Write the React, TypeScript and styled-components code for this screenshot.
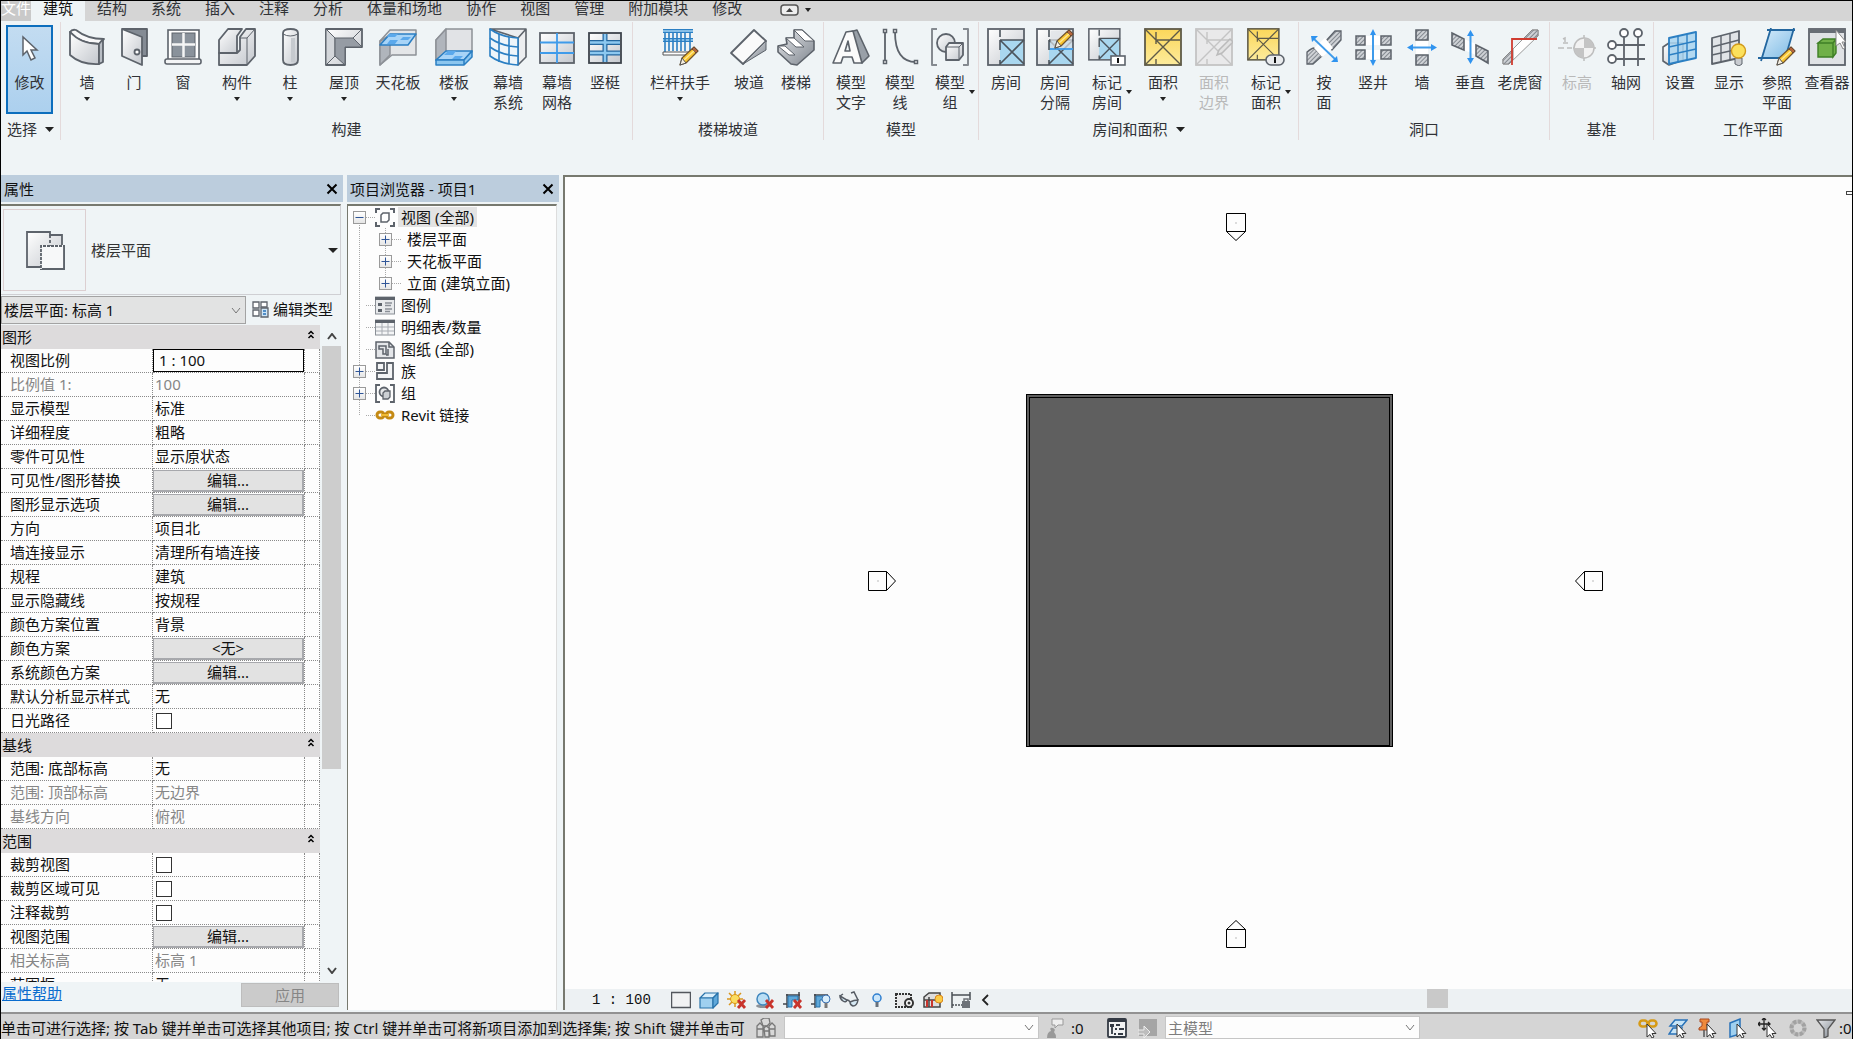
import React from 'react';
import styled, { createGlobalStyle, css } from 'styled-components';

const uiFont = `"Noto Sans", "Noto Sans CJK SC", sans-serif`;
const c = {
  ink: '#303236',
  ribbon: '#eff4f6',
  chrome: '#d5d5d5',
  header: '#bccddd',
  edge: '#77796f',
  steel: '#5d636b',
  blue: '#2b7fc3',
  paper: '#fdfdfd',
};

const GlobalStyle = createGlobalStyle`
  * { box-sizing: border-box; }
  body { margin: 0; background: ${c.ribbon}; overflow: hidden; }
  button, input, select { font: inherit; color: inherit; margin: 0; padding: 0; border: 0; background: none; border-radius: 0; }
  svg { display: block; flex: none; }
`;

const Shell = styled.div`
  height: 100vh;
  display: flex;
  flex-direction: column;
  border: solid #000;
  border-width: 1px 1px 0 1px;
  font: 15px/20px ${uiFont};
  color: ${c.ink};
  background: ${c.ribbon};
  overflow: hidden;
`;

/* ---------- tabs ---------- */
const TabBar = styled.nav`
  display: flex;
  flex: none;
  height: 20px;
  background: ${c.chrome};
`;
const Tab = styled.button<{ $active?: boolean; $file?: boolean }>`
  height: 20px;
  padding: 0 12px;
  line-height: 14px;
  padding-bottom: 6px;
  white-space: nowrap;
  ${(p) => p.$active && css`background: ${c.ribbon}; color: #111;`}
  ${(p) => p.$file && css`background: #c9c9c9; color: #fff; padding-left: 0; padding-right: 0;`}
`;
const CollapseButton = styled.button`
  display: flex;
  align-items: center;
  gap: 6px;
  height: 17px;
  margin-left: 26px;
`;

/* ---------- ribbon ---------- */
const Ribbon = styled.div`
  display: flex;
  flex: none;
  height: 154px;
  padding-top: 1px;
`;
const RibbonPanel = styled.section`
  display: flex;
  flex-direction: column;
  flex: none;
  height: 118px;
  border-right: 1px solid #e4dadb;
  &:last-child { border-right: 0; }
`;
const Tools = styled.div<{ $pad: number }>`
  display: flex;
  height: 98px;
  padding-right: ${(p) => p.$pad}px;
`;
const PanelTitle = styled.div`
  display: flex;
  align-items: center;
  justify-content: center;
  gap: 8px;
  line-height: 18px;
`;
const ToolButton = styled.button<{ $w: number }>`
  width: ${(p) => p.$w}px;
  padding-top: 6px;
  display: flex;
  flex-direction: column;
  align-items: center;
  &:disabled { color: #b9b9b9; }
`;
const ToolLabel = styled.span<{ $side?: boolean }>`
  margin-top: 6px;
  text-align: center;
  white-space: pre;
  ${(p) => p.$side && css`
    display: grid;
    grid-template-columns: 6px auto 6px;
    align-items: center;
    column-gap: 4px;
    &::before { content: ''; }
  `}
`;
const BelowArrow = styled.span`
  margin-top: 5px;
`;
const ModifyButton = styled.button`
  width: 47px;
  height: 89px;
  margin: 3px 6px 0 5px;
  padding-top: 9px;
  display: flex;
  flex-direction: column;
  align-items: center;
  gap: 3px;
  border: 1px solid #0c6ebd;
  outline: 1px solid #0c6ebd;
  outline-offset: -2px;
  background: linear-gradient(#c3dcf1, #acd0ee);
`;

/* ---------- docked panels ---------- */
const Workspace = styled.main`
  display: flex;
  flex: 1;
  min-height: 0;
  font-size: 15px;
  color: #111;
`;
const Dock = styled.section<{ $w: number }>`
  display: flex;
  flex-direction: column;
  flex: none;
  width: ${(p) => p.$w}px;
  margin-right: 4px;
`;
const DockHeader = styled.header`
  display: flex;
  align-items: center;
  justify-content: space-between;
  height: 27px;
  margin-bottom: 2px;
  padding: 0 5px 0 3px;
  background: ${c.header};
`;
const CloseButton = styled.button`
  padding: 0;
`;
const TypeSelector = styled.button`
  display: flex;
  align-items: center;
  height: 91px;
  width: 340px;
  padding: 0 2px;
  border: solid #cfcfd3;
  border-width: 2px 1px 1px 0;
  border-top-color: ${c.edge};
  color: #333;
`;
const Preview = styled.span`
  display: flex;
  align-items: center;
  justify-content: center;
  width: 83px;
  height: 82px;
  border: 1px solid #dccfd1;
`;
const PreviewName = styled.span`
  flex: 1;
  padding-left: 5px;
  text-align: left;
`;
const InstanceRow = styled.div`
  display: flex;
  align-items: center;
  height: 30px;
`;
const Combo = styled.label<{ $w: number; $bg: string; $line: string; $h: number }>`
  display: grid;
  align-items: center;
  width: ${(p) => p.$w}px;
  height: ${(p) => p.$h}px;
  background: ${(p) => p.$bg};
  border: 1px solid ${(p) => p.$line};
  & > * { grid-area: 1 / 1; }
  & > svg { justify-self: end; margin-right: 4px; pointer-events: none; }
`;
const ComboSelect = styled.select<{ $muted?: boolean }>`
  appearance: none;
  width: 100%;
  height: 100%;
  padding: 0 24px 0 2px;
  opacity: 1;
  color: ${(p) => (p.$muted ? '#7d7d7d' : '#111')};
`;
const EditType = styled.button`
  display: flex;
  align-items: center;
  gap: 4px;
  margin-left: 6px;
  padding-bottom: 2px;
`;
const PropertyArea = styled.div`
  display: flex;
  flex: 1;
  min-height: 0;
  width: 340px;
  overflow: hidden;
`;
const PropertyTable = styled.table`
  width: 319px;
  table-layout: fixed;
  border-spacing: 0;
  align-self: flex-start;
  background: ${c.paper};
`;
const GroupHead = styled.th`
  height: 24px;
  padding: 0;
  background: #dddbdc;
  font-weight: 400;
`;
const GroupToggle = styled.button`
  display: flex;
  align-items: center;
  justify-content: space-between;
  width: 100%;
  padding: 0 5px 0 1px;
`;
const Cell = styled.td<{ $muted?: boolean; $label?: boolean; $control?: boolean }>`
  height: 24px;
  padding: ${(p) => (p.$control ? '0' : p.$label ? '0 0 2px 9px' : '0 0 2px 2px')};
  border: dotted #8a8a8a;
  border-width: 0 1px 1px 0;
  line-height: 20px;
  white-space: nowrap;
  color: ${(p) => (p.$muted ? '#868686' : '#111')};
`;
const ValueInput = styled.input`
  display: block;
  width: 100%;
  height: 23px;
  padding: 0 0 2px 5px;
  border: 1px solid #000;
`;
const ValueButton = styled.button`
  display: block;
  width: 100%;
  height: 22px;
  line-height: 18px;
  background: #e2e2e2;
  border: solid #a7a8ac;
  border-width: 1px 2px 2px 1px;
`;
const Tick = styled.input`
  appearance: none;
  display: block;
  width: 16px;
  height: 16px;
  margin-left: 3px;
  border: 1px solid #333;
  background: #fff;
`;
const ScrollTrack = styled.div`
  display: flex;
  flex-direction: column;
  align-items: center;
  width: 21px;
  padding: 8px 0 8px 2px;
`;
const ScrollThumb = styled.div`
  width: 19px;
  height: 423px;
  margin: 6px 0 auto;
  background: #cdcdcd;
`;
const DockFooter = styled.footer`
  display: flex;
  justify-content: space-between;
  align-items: center;
  height: 30px;
  padding: 0 4px 4px 1px;
`;
const HelpLink = styled.a`
  color: #0a6cce;
  text-decoration: underline;
  line-height: 18px;
  padding-bottom: 4px;
`;
const ApplyButton = styled.button`
  width: 98px;
  height: 24px;
  background: #cbcbcb;
  border: 1px solid #bdbdbd;
  color: #868686;
`;

/* ---------- project browser ---------- */
const Tree = styled.ul`
  flex: 1;
  margin: 0 2px 2px 0;
  padding: 0 0 0 5px;
  list-style: none;
  background: ${c.paper};
  border: solid ${c.edge};
  border-width: 2px 1px 0 1px;
  border-right-color: #ddd;
`;
const TreeRow = styled.li`
  display: flex;
  align-items: center;
  height: 22px;
`;
const Slot = styled.span<{ $line: 'full' | 'top' | 'bottom' }>`
  display: flex;
  align-items: center;
  width: 13px;
  height: 22px;
  background: repeating-linear-gradient(#aaa 0 1px, transparent 1px 2px) no-repeat;
  background-size: 1px ${(p) => (p.$line === 'full' ? '100%' : '50%')};
  background-position: 6px ${(p) => (p.$line === 'bottom' ? '100%' : '0')};
`;
const Expander = styled.button`
  width: 13px;
  height: 13px;
  border: 1px solid #9a9a9a;
  background: linear-gradient(#fff, #e6e6e6);
`;
const Link = styled.span`
  width: 9px;
  height: 1px;
  background: repeating-linear-gradient(90deg, #aaa 0 1px, transparent 1px 2px);
`;
const Indent = styled.span`
  width: 13px;
`;
const NodeName = styled.span<{ $selected?: boolean }>`
  margin-left: 3px;
  padding: 0 3px;
  line-height: 20px;
  white-space: nowrap;
  background: ${(p) => (p.$selected ? '#e3e3e3' : 'transparent')};
`;

/* ---------- canvas ---------- */
const ViewArea = styled.section`
  display: flex;
  flex-direction: column;
  flex: 1;
  min-width: 0;
  margin: 0 0 2px;
  border: solid ${c.edge};
  border-width: 2px 0 0 2px;
`;
const Canvas = styled.div`
  position: relative;
  flex: 1;
  background: ${c.paper};
  overflow: hidden;
`;
const Placed = styled.div<{ $x: number; $y: number }>`
  position: absolute;
  left: ${(p) => p.$x}px;
  top: ${(p) => p.$y}px;
`;
const FloorSlab = styled(Placed)`
  width: 367px;
  height: 353px;
  border: 1px solid #000;
  background: #5f5f5f;
  padding: 2px;
  &::before {
    content: '';
    display: block;
    height: 100%;
    border: 1px solid #000;
  }
`;
const CornerHandle = styled(Placed)`
  width: 8px;
  height: 4px;
  border: 1px solid #444;
`;
const ViewBar = styled.div`
  display: flex;
  align-items: center;
  height: 21px;
  background: #edf1f3;
`;
const ScaleButton = styled.button`
  width: 102px;
  padding-left: 27px;
  text-align: left;
  font: 14px/18px "Liberation Mono", monospace;
  color: #111;
  white-space: pre;
`;
const IconButton = styled.button<{ $w: number }>`
  display: flex;
  justify-content: center;
  align-items: center;
  width: ${(p) => p.$w}px;
  flex: none;
`;
const HScroll = styled.div`
  flex: 1;
  display: flex;
  height: 21px;
  padding-left: 432px;
`;
const HThumb = styled.div`
  width: 21px;
  height: 19px;
  background: #c9c9c9;
`;

/* ---------- status bar ---------- */
const StatusBar = styled.footer`
  display: flex;
  align-items: center;
  flex: none;
  height: 27px;
  padding-top: 2px;
  border-top: 2px solid #929292;
  background: ${c.chrome};
  color: #111;
`;
const Hint = styled.span`
  flex: 0 0 747px;
  overflow: hidden;
  white-space: nowrap;
  line-height: 22px;
`;
const Count = styled.span<{ $w: number }>`
  width: ${(p) => p.$w}px;
  white-space: nowrap;
`;
const Push = styled.span`
  flex: 1;
`;

/* ---------- small glyphs ---------- */
const Caret = ({ w = 6, h = 4 }: { w?: number; h?: number }) => (
  <svg width={w} height={h} viewBox="0 0 6 4" preserveAspectRatio="none"><path d="M0 0H6L3 4Z" fill="#222" /></svg>
);
const Chevron = ({ up, dark }: { up?: boolean; dark?: boolean }) => (
  <svg width="10" height="7" viewBox="0 0 10 7">
    <path d={up ? 'M1 6L5 1L9 6' : 'M1 1L5 6L9 1'} fill="none" stroke={dark ? '#444' : '#777'} strokeWidth={dark ? 2 : 1} />
  </svg>
);
const DoubleUp = () => (
  <svg width="8" height="14" viewBox="0 0 8 14"><path d="M1.500 4L4 1.500L6.500 4M1.500 8L4 5.500L6.500 8" fill="none" stroke="#000" strokeWidth="1.500" /></svg>
);
const Cross = () => (
  <svg width="12" height="12" viewBox="0 0 12 12"><path d="M1.500 1.500L10.500 10.500M10.500 1.500L1.500 10.500" stroke="#000" strokeWidth="2" /></svg>
);

const HiddenDefs = styled.svg`
  position: absolute;
`;
const Defs = () => (
  <HiddenDefs width="0" height="0" aria-hidden>
    <defs>
      <linearGradient id="m" x1="0" y1="0" x2="1" y2="1"><stop offset="0" stopColor="#fff" /><stop offset="1" stopColor="#c3c7cd" /></linearGradient>
      <linearGradient id="d" x1="0" y1="0" x2="1" y2="1"><stop offset="0" stopColor="#e6e8eb" /><stop offset="1" stopColor="#7e858e" /></linearGradient>
      <linearGradient id="b" x1="0" y1="0" x2="1" y2="1"><stop offset="0" stopColor="#d8ecfa" /><stop offset="1" stopColor="#7fbce6" /></linearGradient>
      <linearGradient id="y" x1="0" y1="0" x2="0" y2="1"><stop offset="0" stopColor="#fbd75a" /><stop offset="1" stopColor="#fdeb9c" /></linearGradient>
      <pattern id="h" width="3" height="3" patternUnits="userSpaceOnUse" patternTransform="rotate(45)"><rect width="3" height="3" fill="#cfd2d6" /><path d="M0 0V3" stroke="#70767e" strokeWidth="1.600" /></pattern>
    </defs>
  </HiddenDefs>
);

const S = c.steel;
const Pencil = ({ x, y }: { x: number; y: number }) => (
  <g transform={`translate(${x} ${y})`} strokeLinejoin="round">
    <path d="M1 19L3 12L15 1L19 5L7 17Z" fill="#f8c531" stroke="#72542c" strokeWidth="1.200" />
    <path d="M13 3L15 1L19 5L17 7Z" fill="#b5653a" stroke="#6b4a35" />
    <path d="M5 14L15 5" stroke="#ffe78e" strokeWidth="1.500" />
    <path d="M1 19L3 12L7 17Z" fill="#f7efe0" stroke="#555" />
  </g>
);
const RoomPlan = ({ s = 36 }: { s?: number }) => (
  <g transform={`scale(${s / 36})`}>
    <rect x="1" y="1" width="36" height="36" fill="url(#m)" stroke={S} strokeWidth="1.800" />
    <path d="M13 12H36V36H13Z" fill="#a9d7ef" />
    <path d="M13 2V9M13 12H37M13 12V22M13 32V37M37 12L13 36M13 12L37 36" stroke="#4c545c" strokeWidth="1.600" fill="none" />
  </g>
);
const AreaPlan = ({ s = 36, off }: { s?: number; off?: boolean }) => (
  <g transform={`scale(${s / 36})`}>
    <rect x="1" y="1" width="36" height="36" fill={off ? '#e9e9ea' : 'url(#y)'} stroke={off ? '#c4c4c4' : '#5e5a48'} strokeWidth="1.800" />
    <path d="M1 1L37 37M37 1L1 37M12 4V16M12 12H36M12 31V36" stroke={off ? '#c4c4c4' : '#5e5a48'} strokeWidth="1.400" fill="none" />
  </g>
);

const icons: Record<string, React.ReactNode> = {
  wall: <g stroke={S} strokeWidth="1.800" strokeLinejoin="round"><path d="M2 4Q4 1 8 2Q19 11 36 11L31 16Q13 16 2 4Z" fill="#f8f8f9" /><path d="M2 4Q13 16 31 16V36Q13 37 2 27Z" fill="url(#m)" /><path d="M31 16L35 11V34L31 36Z" fill="#b8bdc4" /></g>,
  door: <g stroke={S} strokeWidth="1.800" strokeLinejoin="round"><path d="M7 1H32V28H27" fill="#848b94" /><path d="M7 1L27 9V37L7 28Z" fill="url(#m)" /><circle cx="22" cy="24" r="2.500" fill="#fff" /></g>,
  window: <g stroke={S} strokeWidth="1.600"><rect x="4" y="2" width="31" height="30" fill="#fff" /><rect x="8" y="5" width="23" height="24" fill="#8a929b" strokeWidth="1" /><path d="M19.500 5V29M8 16.500H31" stroke="#f5f5f5" strokeWidth="2.500" /><rect x="1" y="31" width="36" height="5" rx="2" fill="#f4f5f6" /></g>,
  component: <g stroke={S} strokeWidth="1.800" strokeLinejoin="round"><path d="M1 12L10 1H24L19 8V25H1Z" fill="url(#m)" /><path d="M1 25H19L22 22V9L28 1H37V28L29 37H1Z" fill="url(#m)" /><path d="M22 10H29L37 1M29 10V37" fill="none" strokeWidth="1" /></g>,
  column: <g stroke={S} strokeWidth="1.800"><path d="M12 5Q12 1 19.500 1T27 5V32Q27 37 19.500 37T12 32Z" fill="url(#m)" /><path d="M12 6Q19 10 27 6" fill="none" strokeWidth="1" /><path d="M22 10V34" stroke="#c6cacf" strokeWidth="4" /></g>,
  roof: <g stroke={S} strokeWidth="1.800" strokeLinejoin="round"><path d="M1 1H37V19H20V37H1Z" fill="url(#m)" /><path d="M1 1L10 10V28L1 37Z" fill="#d3d6da" strokeWidth="1" /><path d="M10 10H28L37 19H20V37L10 28Z" fill="#969ca4" strokeWidth="1" /><path d="M28 10L37 1" strokeWidth="1" /></g>,
  ceiling: <g strokeWidth="1.500" strokeLinejoin="round"><path d="M1 13L11 2H37V27H13L1 37Z" fill="#e4e6e8" stroke="#8d9197" /><path d="M1 13L11 7V27L1 37Z" fill="#b0b5bc" stroke="#8d9197" /><path d="M11 6H37L29 17H1Z" fill="#a8d4f7" stroke={c.blue} /><path d="M10 6H19L16 9H8ZM24 9H32L29 12H21ZM11 12H19L16 16H8Z" fill="#5ba9ec" /></g>,
  floor: <g strokeWidth="1.500" strokeLinejoin="round"><path d="M1 12L11 1H37V24H11L1 32Z" fill="#e1e3e6" stroke="#8d9197" /><path d="M1 12L11 1V24L1 32Z" fill="#b0b5bc" stroke="#8d9197" /><path d="M1 32L11 23H37L29 32Z" fill="#a8d4f7" stroke={c.blue} /><path d="M1 32H29V37H1ZM29 32L37 23V29L29 37Z" fill="#8cc6ef" stroke={c.blue} /><path d="M13 23H21L18 27H9ZM20 28H28L25 31H17Z" fill="#5ba9ec" /></g>,
  curtainSystem: <g strokeLinejoin="round"><path d="M1 1H37L29 10Z M29 10L37 1V29L29 37Z" fill="#eceef0" stroke={S} strokeWidth="1.600" /><path d="M1 1Q12 9 29 10V37Q12 36 1 28Z" fill="#eef5fa" stroke={c.blue} strokeWidth="1.600" /><path d="M10 6V34M20 9V36M1 10Q12 18 29 19M1 19Q12 27 29 28" fill="none" stroke={c.blue} strokeWidth="1.600" /></g>,
  curtainGrid: <g><rect x="2" y="5" width="34" height="30" fill="url(#m)" stroke={S} strokeWidth="1.800" /><path d="M19 5V35M2 14.500H36M2 25H36" stroke="#3f9bea" strokeWidth="1.800" /></g>,
  mullion: <g><rect x="3" y="5" width="32" height="30" fill="url(#m)" stroke="#3e444c" strokeWidth="1.800" /><path d="M4 14.500H34M4 25H34M19 6V34" stroke="#24679f" strokeWidth="5" /><path d="M4 14.500H34M4 25H34M19 6V34" stroke="#8cc8f0" strokeWidth="2.500" /></g>,
  railing: <g><path d="M2 3H32M2 12H32" stroke={c.blue} strokeWidth="4" /><path d="M2 3H32M2 12H32" stroke="#a4d4f4" strokeWidth="1.500" /><path d="M4 5V26M8 5V23M12 5V23M16 5V23M20 5V23M24 5V23M29 5V23" stroke={c.blue} strokeWidth="1.600" /><path d="M2 24H32V27H2Z" fill="#fff" stroke="#555" /><Pencil x={18} y={18} /></g>,
  ramp: <g stroke={S} strokeWidth="1.800" strokeLinejoin="round"><path d="M1 25L24 2L36 13L13 36Z" fill="#fafafa" /><path d="M36 13V22L13 36Z" fill="url(#d)" strokeWidth="1" /></g>,
  stairs: <g stroke={S} strokeWidth="1.600" strokeLinejoin="round"><path d="M1 18L10 16L9 10L17 10V2H25L37 13V22L20 37L14 36L1 24Z" fill="url(#d)" /><path d="M1 18H8L18 27H12ZM9 10H17L27 19H19ZM17 2H25L37 13H28Z" fill="#fff" strokeWidth="1" /></g>,
  modelText: <g stroke={S} strokeWidth="1.600" strokeLinejoin="round"><path d="M18 4L25 2L37 28L30 35Z" fill="#99a0a8" /><path d="M1 35L14 4L21 3L30 35H22L20 29H11L9 35ZM13 23H18L16 13Z" fill="#fbfbfb" fillRule="evenodd" /></g>,
  modelLine: <g fill="none" stroke={S} strokeWidth="1.800"><path d="M4 4V33M14 4Q14 34 35 34" /><path d="M2.500 1.500H5.500V4.500H2.500ZM2.500 32.500H5.500V35.500H2.500ZM12.500 1.500H15.500V4.500H12.500ZM33.500 32.500H36.500V35.500H33.500Z" fill="#fff" strokeWidth="1.500" /></g>,
  modelGroup: <g stroke={S} strokeWidth="1.800" strokeLinejoin="round"><path d="M6 1H1V37H6M32 1H37V37H32" fill="none" strokeWidth="2" stroke="#858a90" /><circle cx="15" cy="15" r="9" fill="url(#m)" /><path d="M15 19L18 15H32V27L28 32H15Z" fill="url(#m)" /><path d="M15 19H28L32 15M28 19V32" fill="none" strokeWidth="1" /></g>,
  room: <RoomPlan />,
  roomSeparator: <g><RoomPlan /><path d="M15 3H36V20H14Z" fill="#dfe3e7" opacity=".7" /><path d="M14 21H37" stroke="#3f9bea" strokeWidth="1.800" /><Pencil x={18} y={1} /></g>,
  tagRoom: <g><RoomPlan s={31} /><rect x="23" y="28" width="14" height="9" fill="#fff" stroke={S} strokeWidth="1.600" /><path d="M30 30V35" stroke="#111" strokeWidth="2" /></g>,
  area: <AreaPlan />,
  areaBoundary: <g><AreaPlan off /><path d="M22 27L24 22L35 11L38 14L27 25Z" fill="#e2e2e2" stroke="#bbb" strokeWidth="1.500" /></g>,
  tagArea: <g><AreaPlan s={31} /><rect x="19" y="27" width="18" height="10" rx="5" fill="#e9ebed" stroke={S} strokeWidth="1.600" /><path d="M28 29V35" stroke="#111" strokeWidth="2" /></g>,
  byFace: <g stroke={S} strokeWidth="1.300"><path d="M2 24Q7 20 9 20L17 28L8 36H2ZM20 14L30 3H36V12L27 22Z" fill="url(#h)" /><path d="M9 20L20 10L28 20L17 29Z" fill="#fff" stroke="none" /><path d="M8 10L31 32" stroke="#3f9bea" strokeWidth="1.800" /><path d="M6 8H13L7 14ZM33 34H26L32 28Z" fill="#2f93ef" stroke="none" /></g>,
  shaft: <g><path d="M1 8H37V17H1ZM1 22H37V31H1Z" fill="#fff" /><path d="M2 8H11V17H2ZM27 8H37V17H27ZM2 22H11V31H2ZM27 22H37V31H27Z" fill="url(#h)" stroke={S} strokeWidth="1.500" /><path d="M19 5V34" stroke="#3f9bea" strokeWidth="2" /><path d="M19 1L22 7H16ZM19 38L22 32H16Z" fill="#2f93ef" /></g>,
  wallOpening: <g><path d="M13 13H25V26H13Z" fill="#fff" /><path d="M13 2H25V12H13ZM13 27H25V37H13Z" fill="url(#h)" stroke={S} strokeWidth="1.600" /><path d="M8 19.500H30" stroke="#3f9bea" strokeWidth="2" /><path d="M4 19.500L10 16V23ZM34 19.500L28 16V23Z" fill="#2f93ef" /></g>,
  vertical: <g><path d="M13 11L25 16V27L13 22Z" fill="#fff" /><path d="M1 5L13 11V22L1 17ZM25 17L37 23V35L25 28Z" fill="url(#h)" stroke={S} strokeWidth="1.600" /><path d="M19.500 5V33" stroke="#3f9bea" strokeWidth="2" /><path d="M19.500 2L23 8H16ZM19.500 36L23 30H16Z" fill="#2f93ef" /></g>,
  dormer: <g><path d="M2 31L31 2H37V8L8 36H2Z" fill="#fff" stroke="#999" /><path d="M2 31L12 21V32L8 36H2ZM22 11L31 2H37V8L31 11Z" fill="url(#h)" stroke="#888" /><path d="M36 11H11V37" fill="none" stroke="#d03c30" strokeWidth="1.800" /></g>,
  level: <g stroke="#bdbdbd" strokeWidth="1.500" fill="none"><path d="M0 20H14" strokeDasharray="6 3" /><path d="M7 14V10L5 11M5 15H10M15 20H38M26 7V33" /><circle cx="26" cy="20" r="10" fill="#f2f2f2" /><path d="M26 10A10 10 0 0 1 36 20H26ZM26 30A10 10 0 0 1 16 20H26Z" fill="#c4c4c4" stroke="none" /></g>,
  grid: <g stroke={S} strokeWidth="1.800" fill="#fff"><path d="M17 9V38M31 9V38M9 17H38M9 31H38" /><circle cx="17" cy="5" r="4" /><circle cx="31" cy="5" r="4" /><circle cx="5" cy="17" r="4" /><circle cx="5" cy="31" r="4" /></g>,
  setPlane: <g strokeLinejoin="round"><path d="M2 19L8 15H22V32L8 37L2 33Z" fill="url(#m)" stroke={S} strokeWidth="1.600" /><path d="M8 10L35 4V30L8 36Z" fill="#a8d4f0" fillOpacity=".85" stroke={c.blue} strokeWidth="1.800" /><path d="M17 8V34M26 6V32M8 19L35 13M8 27L35 21" stroke={c.blue} strokeWidth="1.400" /></g>,
  showPlane: <g strokeLinejoin="round"><path d="M2 10L29 3V30L2 36Z" fill="#e1e4e7" stroke={S} strokeWidth="1.800" /><path d="M11 8V34M20 6V32M2 19L29 12M2 27L29 21" stroke={S} strokeWidth="1.400" /><path d="M25 30H32V36L29 38L25 36Z" fill="#c8cbd0" stroke={S} /><circle cx="28.500" cy="23" r="7" fill="#fce15c" stroke="#d29a1b" strokeWidth="1.400" /></g>,
  refPlane: <g><path d="M12 1L35 1L27 30H3Z" fill="url(#b)" /><path d="M9 2H37M0 30H28M13 0L3 33M36 0L27 31" stroke="#24679f" strokeWidth="1.800" /><Pencil x={18} y={18} /></g>,
  viewer: <g><rect x="1" y="1" width="36" height="36" fill="#dfe2e5" stroke={S} strokeWidth="1.800" /><path d="M1 1H37V5H1Z" fill="#676d75" /><path d="M10 15L15 11H28L25 15Z M10 15H25V29H10ZM25 15L28 11V25L25 29Z" fill="#70b048" stroke="#3e7f26" strokeWidth="1.400" /><path d="M28 2V18L32 15L35 21L37 20L34 14H38Z" fill="#fff" stroke="#888" /></g>,
};

const RibbonIcon = ({ name }: { name: string }) => (
  <svg width="38" height="38" viewBox="0 0 38 38" aria-hidden>{icons[name]}</svg>
);

type Tool = { icon: string; label: string; w: number; below?: boolean; side?: boolean; off?: boolean };
type PanelData = { title: string; pad: number; menu?: boolean; tools: Tool[] };

const panels: PanelData[] = [
  { title: '构建', pad: 3, tools: [
    { icon: 'wall', label: '墙', w: 52, below: true },
    { icon: 'door', label: '门', w: 42 },
    { icon: 'window', label: '窗', w: 56 },
    { icon: 'component', label: '构件', w: 52, below: true },
    { icon: 'column', label: '柱', w: 54, below: true },
    { icon: 'roof', label: '屋顶', w: 54, below: true },
    { icon: 'ceiling', label: '天花板', w: 54 },
    { icon: 'floor', label: '楼板', w: 58, below: true },
    { icon: 'curtainSystem', label: '幕墙\n系统', w: 50 },
    { icon: 'curtainGrid', label: '幕墙\n网格', w: 48 },
    { icon: 'mullion', label: '竖梃', w: 48 },
  ] },
  { title: '楼梯坡道', pad: 2, tools: [
    { icon: 'railing', label: '栏杆扶手', w: 94, below: true },
    { icon: 'ramp', label: '坡道', w: 44 },
    { icon: 'stairs', label: '楼梯', w: 50 },
  ] },
  { title: '模型', pad: 0, tools: [
    { icon: 'modelText', label: '模型\n文字', w: 54 },
    { icon: 'modelLine', label: '模型\n线', w: 44 },
    { icon: 'modelGroup', label: '模型\n组', w: 56, side: true },
  ] },
  { title: '房间和面积', pad: 5, menu: true, tools: [
    { icon: 'room', label: '房间', w: 54 },
    { icon: 'roomSeparator', label: '房间\n分隔', w: 44 },
    { icon: 'tagRoom', label: '标记\n房间', w: 60, side: true },
    { icon: 'area', label: '面积', w: 52, below: true },
    { icon: 'areaBoundary', label: '面积\n边界', w: 50, off: true },
    { icon: 'tagArea', label: '标记\n面积', w: 54, side: true },
  ] },
  { title: '洞口', pad: 2, tools: [
    { icon: 'byFace', label: '按\n面', w: 50 },
    { icon: 'shaft', label: '竖井', w: 48 },
    { icon: 'wallOpening', label: '墙', w: 50 },
    { icon: 'vertical', label: '垂直', w: 46 },
    { icon: 'dormer', label: '老虎窗', w: 54 },
  ] },
  { title: '基准', pad: 5, tools: [
    { icon: 'level', label: '标高', w: 54, off: true },
    { icon: 'grid', label: '轴网', w: 44 },
  ] },
  { title: '工作平面', pad: 0, tools: [
    { icon: 'setPlane', label: '设置', w: 52 },
    { icon: 'showPlane', label: '显示', w: 46 },
    { icon: 'refPlane', label: '参照\n平面', w: 50 },
    { icon: 'viewer', label: '查看器', w: 50 },
  ] },
];

const tabs = ['文件', '建筑', '结构', '系统', '插入', '注释', '分析', '体量和场地', '协作', '视图', '管理', '附加模块', '修改'];

/* ---------- properties data ---------- */
type Prop = { name: string; kind?: 'input' | 'button' | 'tick'; value?: string; muted?: boolean };
const groups: { name: string; rows: Prop[] }[] = [
  { name: '图形', rows: [
    { name: '视图比例', kind: 'input', value: '1 : 100' },
    { name: '比例值 1:', value: '100', muted: true },
    { name: '显示模型', value: '标准' },
    { name: '详细程度', value: '粗略' },
    { name: '零件可见性', value: '显示原状态' },
    { name: '可见性/图形替换', kind: 'button', value: '编辑...' },
    { name: '图形显示选项', kind: 'button', value: '编辑...' },
    { name: '方向', value: '项目北' },
    { name: '墙连接显示', value: '清理所有墙连接' },
    { name: '规程', value: '建筑' },
    { name: '显示隐藏线', value: '按规程' },
    { name: '颜色方案位置', value: '背景' },
    { name: '颜色方案', kind: 'button', value: '<无>' },
    { name: '系统颜色方案', kind: 'button', value: '编辑...' },
    { name: '默认分析显示样式', value: '无' },
    { name: '日光路径', kind: 'tick' },
  ] },
  { name: '基线', rows: [
    { name: '范围: 底部标高', value: '无' },
    { name: '范围: 顶部标高', value: '无边界', muted: true },
    { name: '基线方向', value: '俯视', muted: true },
  ] },
  { name: '范围', rows: [
    { name: '裁剪视图', kind: 'tick' },
    { name: '裁剪区域可见', kind: 'tick' },
    { name: '注释裁剪', kind: 'tick' },
    { name: '视图范围', kind: 'button', value: '编辑...' },
    { name: '相关标高', value: '标高 1', muted: true },
    { name: '范围框', value: '无' },
  ] },
];

const PropertyRow = ({ row }: { row: Prop }) => {
  const id = `prop-${row.name}`;
  const labelled = row.kind === 'input' || row.kind === 'tick';
  return (
    <tr>
      <Cell $label $muted={row.muted}>{labelled ? <label htmlFor={id}>{row.name}</label> : row.name}</Cell>
      <Cell $muted={row.muted} $control={!!row.kind}>
        {row.kind === 'input' && <ValueInput id={id} defaultValue={row.value} />}
        {row.kind === 'button' && <ValueButton aria-label={`${row.name} ${row.value}`}>{row.value}</ValueButton>}
        {row.kind === 'tick' && <Tick id={id} type="checkbox" />}
        {!row.kind && row.value}
      </Cell>
      <Cell />
    </tr>
  );
};

/* ---------- tree ---------- */
const treeIcons: Record<string, React.ReactNode> = {
  views: <g fill="none" stroke={S} strokeWidth="2"><path d="M5 1H1V5M15 1H19V5M5 18H1V14M15 18H19V14" /><path d="M6 7L8 5H14V12L12 14H6Z" fill="#fff" strokeWidth="1.500" /></g>,
  legend: <g><rect x="0.500" y="1" width="19" height="17" fill="#e8eaec" stroke="#8a8f96" /><path d="M0 1H20V4H0Z" fill={S} /><path d="M3 7H7V10H3ZM3 13H7V16H3Z" fill={S} /><path d="M10 7H17M10 9.500H16M10 13H17M10 15.500H15" stroke="#8a9097" strokeWidth="1.300" /></g>,
  schedule: <g><rect x="0.500" y="2" width="19" height="15" fill="#f4f5f6" stroke="#8a8f96" /><path d="M0 2H20V5H0Z" fill={S} /><path d="M1 9H19M1 13H19M7 5V17M13 5V17" stroke="#a8acb2" /></g>,
  sheet: <g stroke={S} strokeWidth="1.500"><path d="M1 2H14L19 7V18H1Z" fill="#e4e6e9" /><path d="M4 6H11V14H8V9H4ZM14 2V7H19M13 9V15H11" fill="none" /></g>,
  family: <g stroke={S} strokeWidth="1.800" fill="#f3f4f5"><path d="M2 1H9V8H2Z" /><path d="M12 1H18V17H2V11H12Z" /></g>,
  group: <g fill="none" stroke={S} strokeWidth="1.800"><path d="M5 1H1V18H5M15 1H19V18H15" /><circle cx="9" cy="8" r="4.500" fill="#e6e8ea" /><path d="M8 9L10 7H15V13L13 15H8Z" fill="#ccd0d4" strokeWidth="1.300" /></g>,
  link: <g fill="none" stroke="#c48a14" strokeWidth="3"><rect x="2" y="6" width="7" height="6" rx="3" /><rect x="11" y="6" width="7" height="6" rx="3" /><path d="M6 9H14" stroke="#f0bb35" strokeWidth="2" /></g>,
};
type Node = { name: string; icon?: string; box?: '+' | '-'; child?: boolean; last?: boolean; first?: boolean };
const nodes: Node[] = [
  { name: '视图 (全部)', icon: 'views', box: '-', first: true },
  { name: '楼层平面', box: '+', child: true },
  { name: '天花板平面', box: '+', child: true },
  { name: '立面 (建筑立面)', box: '+', child: true, last: true },
  { name: '图例', icon: 'legend' },
  { name: '明细表/数量', icon: 'schedule' },
  { name: '图纸 (全部)', icon: 'sheet' },
  { name: '族', icon: 'family', box: '+' },
  { name: '组', icon: 'group', box: '+' },
  { name: 'Revit 链接', icon: 'link', last: true },
];
const ExpanderBox = ({ node }: { node: Node }) => (
  <Expander aria-label={node.name}>
    <svg width="11" height="11" viewBox="0 0 11 11"><path d={node.box === '+' ? 'M1.500 5.500H9.500M5.500 1.500V9.500' : 'M1.500 5.500H9.500'} stroke="#2f5597" strokeWidth="1" /></svg>
  </Expander>
);
const TreeNode = ({ node }: { node: Node }) => {
  if (node.child) {
    return (
      <TreeRow>
        <Slot $line="full" /><Indent />
        <Slot $line={node.last ? 'top' : 'full'}><ExpanderBox node={node} /></Slot>
        <Link />
        <NodeName>{node.name}</NodeName>
      </TreeRow>
    );
  }
  return (
    <TreeRow>
      <Slot $line={node.first ? 'bottom' : node.last ? 'top' : 'full'}>{node.box && <ExpanderBox node={node} />}</Slot>
      <Link />
      <svg width="20" height="19" viewBox="0 0 20 19">{treeIcons[node.icon!]}</svg>
      <NodeName $selected={node.first}>{node.name}</NodeName>
    </TreeRow>
  );
};

/* ---------- view control and status icons ---------- */
const RedX = () => <path d="M11 9L18 17M18 9L11 17" stroke="#c8342c" strokeWidth="2.800" />;
const viewIcons: [string, React.ReactNode][] = [
  ['详细程度', <g key="i"><rect x="0.500" y="1.500" width="19" height="15" fill="#f1f2f3" stroke="#53575d" strokeWidth="1.500" /></g>],
  ['视觉样式', <g key="i" stroke="#2872aa" strokeWidth="1.200" strokeLinejoin="round"><path d="M1 7L6 2H19L14 7Z" fill="#d9eefb" /><path d="M1 7H14V17H1Z" fill="#9fd0f0" /><path d="M14 7L19 2V12L14 17Z" fill="#5fa8da" /></g>],
  ['日光路径', <g key="i"><path d="M8 0V16M0 8H16M2 2L14 14M14 2L2 14" stroke="#d9961c" strokeWidth="1.500" /><circle cx="8" cy="8" r="4.500" fill="#fbdc5f" stroke="#d9961c" /><RedX /></g>],
  ['阴影', <g key="i"><ellipse cx="8" cy="15" rx="7" ry="2" fill="#8d9298" /><circle cx="8" cy="8" r="6" fill="#b9def5" stroke="#3f86bd" strokeWidth="1.500" /><RedX /></g>],
  ['裁剪视图', <g key="i"><path d="M0 13H4M4 3V17M3 4H17M16 1V14" stroke="#41464d" strokeWidth="1.500" /><path d="M5 5H15V9H9V16H5Z" fill="#5fa8da" stroke="#2872aa" /><RedX /></g>],
  ['显示裁剪区域', <g key="i"><path d="M0 13H4M4 3V17M3 4H17" stroke="#41464d" strokeWidth="1.500" /><path d="M5 5H13V9H9V16H5Z" fill="#5fa8da" stroke="#2872aa" /><circle cx="15" cy="8" r="4" fill="#d9eefb" stroke="#3a6fb0" /><path d="M13.500 12H16.500V17H13.500Z" fill="#777" /></g>],
  ['临时隐藏', <g key="i" fill="#d5e8f3" stroke="#555b63" strokeWidth="1.500"><path d="M1 5L4 3M8 9Q10 9 11 11M12 2L15 1L19 9" fill="none" /><path d="M1 5L8 9Q7 12 4 10Q1 8 1 5Z" /><path d="M11 11Q15 9 19 9Q18 15 14 15Q11 14 11 11Z" /></g>],
  ['显示隐藏图元', <g key="i"><circle cx="10" cy="7" r="4" fill="#cbe6fa" stroke="#2f7fd0" strokeWidth="1.500" /><path d="M8.500 11H11.500V16H8.500Z" fill="#66707c" /></g>],
  ['临时视图属性', <g key="i"><rect x="1" y="3" width="15" height="13" fill="#e8e9ea" stroke="#333" strokeWidth="2" strokeDasharray="2 1" /><circle cx="14" cy="12" r="4" fill="#fff" stroke="#333" strokeWidth="2" /><circle cx="14" cy="12" r="1.500" fill="#333" /></g>],
  ['分析模型', <g key="i"><path d="M1 6L6 2H17V16H1ZM1 9H12M6 6V16" fill="#ddd" stroke="#444" strokeWidth="1.500" /><path d="M4 9V16M9 9V16" stroke="#c8342c" strokeWidth="2" /><circle cx="16" cy="8" r="4" fill="#fbcb45" stroke="#d9861c" /></g>],
  ['约束', <g key="i"><path d="M1 1V17M19 1V9M1 4H19" stroke="#4a4f55" strokeWidth="1.500" /><path d="M1 14H11" stroke="#4a4f55" strokeWidth="1.500" strokeDasharray="2 1" /><path d="M11 10H19V17H11Z" fill="#6d7278" /><path d="M13 10V8H17V10" fill="none" stroke="#6d7278" strokeWidth="1.500" /></g>],
];

const Arrow = () => <path d="M9 6V19L12 16.500L14 20L16 19L14 15.500H18Z" fill="#fff" stroke="#333" />;
const statusIcons: [string, React.ReactNode][] = [
  ['选择链接', <g key="i"><g fill="none" stroke="#d69a15" strokeWidth="2.500"><rect x="1.500" y="2.500" width="8" height="6" rx="3" /><rect x="10.500" y="2.500" width="8" height="6" rx="3" /></g><Arrow /></g>],
  ['选择基线图元', <g key="i"><path d="M7 2H19L14 8H2ZM5 10H14L11 16H1Z" fill="#c8e5f7" stroke="#2872b8" strokeWidth="1.500" /><Arrow /></g>],
  ['选择锁定图元', <g key="i"><path d="M2 1H11V4H9V8L12 10V12H1V10L4 8V4H2Z" fill="#ef8a3c" stroke="#a84820" /><path d="M6 12V19" stroke="#555" strokeWidth="1.500" /><Arrow /></g>],
  ['按面选择图元', <g key="i"><path d="M2 5L12 1V16L2 19Z" fill="#9fd0f0" stroke="#2872b8" strokeWidth="1.500" /><Arrow /></g>],
  ['选择时拖曳', <g key="i"><path d="M6 0V12M0 6H12M4 2L6 0L8 2M4 10L6 12L8 10M2 4L0 6L2 8M10 4L12 6L10 8" stroke="#222" fill="none" strokeWidth="1.300" /><Arrow /></g>],
  ['后台进程', <g key="i"><circle cx="10" cy="10" r="6.500" fill="none" stroke="#bbb" strokeWidth="4" /><circle cx="10" cy="10" r="6.500" fill="none" stroke="#a2a2a2" strokeWidth="4" strokeDasharray="3 2" /></g>],
  ['过滤器', <g key="i"><path d="M1 2H19L12 11V18L8 20V11Z" fill="url(#d)" stroke="#555" strokeWidth="1.300" /></g>],
];

/* An elevation mark: a square head with a pointer on the side it looks towards. */
const ElevationMark = ({ turn }: { turn: 0 | 90 | 180 | 270 }) => (
  <svg width="30" height="30" viewBox="-15 -15 30 30" aria-hidden>
    <g transform={`rotate(${turn})`} fill="none" stroke="#000">
      <path d="M-9.500 -13.500H9.500V4.500H-9.500Z" />
      <path d="M-9.500 4.500L0 13.500L9.500 4.500" />
    </g>
    <path d="M-1 -4H1" stroke="#bbb" transform={`rotate(${turn})`} />
  </svg>
);

export default function App() {
  return (
    <Shell>
      <GlobalStyle />
      <Defs />
      <TabBar>
        {tabs.map((t) => <Tab key={t} $active={t === '建筑'} $file={t === '文件'}>{t}</Tab>)}
        <CollapseButton aria-label="最小化功能区">
          <svg width="19" height="12" viewBox="0 0 19 12"><rect x="1" y="1" width="17" height="10" rx="3" fill="#eee" stroke="#555" strokeWidth="1.500" /><path d="M6 8H13L9.500 4Z" fill="#444" /></svg>
          <Caret />
        </CollapseButton>
      </TabBar>

      <Ribbon>
        <RibbonPanel>
          <Tools $pad={1}>
            <ModifyButton>
              <svg width="18" height="28" viewBox="0 0 18 28"><path d="M2 2V20L6 16L10 25L14 23L10 15H16Z" fill="#fff" stroke={S} strokeWidth="1.500" /></svg>
              <ToolLabel>修改</ToolLabel>
            </ModifyButton>
          </Tools>
          <PanelTitle>选择<Caret w={9} h={5} /></PanelTitle>
        </RibbonPanel>
        {panels.map((p) => (
          <RibbonPanel key={p.title}>
            <Tools $pad={p.pad}>
              {p.tools.map((t) => (
                <ToolButton key={t.icon} $w={t.w} disabled={t.off}>
                  <RibbonIcon name={t.icon} />
                  <ToolLabel $side={t.side}>{t.label}{t.side && <Caret />}</ToolLabel>
                  {t.below && <BelowArrow><Caret /></BelowArrow>}
                </ToolButton>
              ))}
            </Tools>
            <PanelTitle>{p.title}{p.menu && <Caret w={9} h={5} />}</PanelTitle>
          </RibbonPanel>
        ))}
      </Ribbon>

      <Workspace>
        <Dock $w={342}>
          <DockHeader>属性<CloseButton aria-label="关闭属性"><Cross /></CloseButton></DockHeader>
          <TypeSelector>
            <Preview>
              <svg width="40" height="40" viewBox="0 0 40 40"><g stroke={S} strokeWidth="1.800"><path d="M2 2H25V5H37V16H39V39H16V37H2Z" fill="url(#m)" /><path d="M16 16H39V39H16Z" fill="#f7f8f9" /><path d="M16 39V16H39" fill="none" stroke="#f7f8f9" strokeDasharray="1 3" /><path d="M25 5V16" strokeDasharray="3 2" /></g></svg>
            </Preview>
            <PreviewName>楼层平面</PreviewName>
            <Caret w={10} h={5} />
          </TypeSelector>
          <InstanceRow>
            <Combo $w={245} $h={28} $bg="#e2e3e3" $line="#a3a3a3">
              <ComboSelect aria-label="实例"><option>楼层平面: 标高 1</option></ComboSelect>
              <Chevron />
            </Combo>
            <EditType>
              <svg width="17" height="17" viewBox="0 0 17 17"><g fill="#fff" stroke={S} strokeWidth="1.300"><path d="M1 1H7V7H1ZM9 1H15V6H9ZM1 9H7V15H1Z" /><path d="M9 7H16V16H9Z" fill="#cde5f7" /><path d="M11 10H14M11 13H14" stroke="#2872b8" /></g></svg>
              编辑类型
            </EditType>
          </InstanceRow>
          <PropertyArea>
            <PropertyTable>
              <colgroup><col width="152" /><col width="152" /><col width="15" /></colgroup>
              {groups.map((g) => (
                <tbody key={g.name}>
                  <tr><GroupHead colSpan={3}><GroupToggle>{g.name}<DoubleUp /></GroupToggle></GroupHead></tr>
                  {g.rows.map((r) => <PropertyRow key={r.name} row={r} />)}
                </tbody>
              ))}
            </PropertyTable>
            <ScrollTrack><Chevron up dark /><ScrollThumb /><Chevron dark /></ScrollTrack>
          </PropertyArea>
          <DockFooter><HelpLink href="#help">属性帮助</HelpLink><ApplyButton disabled>应用</ApplyButton></DockFooter>
        </Dock>

        <Dock $w={212}>
          <DockHeader>项目浏览器 - 项目1<CloseButton aria-label="关闭项目浏览器"><Cross /></CloseButton></DockHeader>
          <Tree>{nodes.map((n) => <TreeNode key={n.name} node={n} />)}</Tree>
        </Dock>

        <ViewArea>
          <Canvas>
            <Placed $x={656} $y={35}><ElevationMark turn={0} /></Placed>
            <Placed $x={302} $y={389}><ElevationMark turn={270} /></Placed>
            <Placed $x={1009} $y={389}><ElevationMark turn={90} /></Placed>
            <Placed $x={656} $y={742}><ElevationMark turn={180} /></Placed>
            <FloorSlab $x={461} $y={217} />
            <CornerHandle $x={1281} $y={14} />
          </Canvas>
          <ViewBar>
            <ScaleButton>1 : 100</ScaleButton>
            {viewIcons.map(([name, art]) => (
              <IconButton key={name} $w={28} aria-label={name}><svg width="20" height="18" viewBox="0 0 20 18">{art}</svg></IconButton>
            ))}
            <IconButton $w={20} aria-label="收起"><svg width="8" height="12" viewBox="0 0 8 12"><path d="M7 1L2 6L7 11" fill="none" stroke="#222" strokeWidth="1.800" /></svg></IconButton>
            <HScroll><HThumb /></HScroll>
          </ViewBar>
        </ViewArea>
      </Workspace>

      <StatusBar>
        <Hint>单击可进行选择; 按 Tab 键并单击可选择其他项目; 按 Ctrl 键并单击可将新项目添加到选择集; 按 Shift 键并单击可</Hint>
        <IconButton $w={36} aria-label="工作集">
          <svg width="20" height="20" viewBox="0 0 20 20"><g fill="#d8d8d8" stroke="#777" strokeWidth="1.300"><path d="M5 2L8 0H13L14 5L11 8H7Z" /><path d="M1 8L4 5L7 8V19H1ZM8 10L10 8L13 10V19H9ZM13 8L16 5L19 8V18H14Z" /><path d="M1 11H7M13 11H19M9 13H13" /></g></svg>
        </IconButton>
        <Combo $w={255} $h={23} $bg={c.paper} $line="#c6c6c6"><ComboSelect aria-label="活动工作集" disabled><option></option></ComboSelect><Chevron /></Combo>
        <IconButton $w={32} aria-label="编辑请求">
          <svg width="18" height="20" viewBox="0 0 18 20"><path d="M6 1H17V7H12L9 10V7H6Z" fill="#eee" stroke="#999" /><path d="M1 20Q1 14 5 13Q3 9 7 10Q10 11 8 14Q10 16 10 20Z" fill="#999" /></svg>
        </IconButton>
        <Count $w={32}>:0</Count>
        <IconButton $w={28} aria-label="设计选项">
          <svg width="20" height="20" viewBox="0 0 20 20"><rect x="1" y="1" width="18" height="18" rx="1" fill="#f1f2f3" stroke="#333a44" strokeWidth="1.800" /><path d="M1 1H19V4H1ZM3 6H7V9H3Z" fill="#333a44" /><path d="M5 9V16M9 7H13M8 11H10M12 11H17M7 16H9M11 16H16" stroke="#333a44" strokeWidth="1.800" /></svg>
        </IconButton>
        <IconButton $w={34} aria-label="添加到集">
          <svg width="20" height="20" viewBox="0 0 20 20"><rect x="1" y="1" width="18" height="17" fill="#a5a5a5" /><path d="M0 12H6V8L12 14L6 20V16H0Z" fill="#bdbdbd" stroke="#eee" /></svg>
        </IconButton>
        <Combo $w={255} $h={23} $bg={c.paper} $line="#c6c6c6"><ComboSelect $muted aria-label="活动设计选项" disabled><option>主模型</option></ComboSelect><Chevron /></Combo>
        <Push />
        {statusIcons.map(([name, art], i) => (
          <IconButton key={name} $w={i === statusIcons.length - 1 ? 26 : 30} aria-label={name}><svg width="20" height="20" viewBox="0 0 20 20">{art}</svg></IconButton>
        ))}
        <Count $w={13}>:0</Count>
      </StatusBar>
    </Shell>
  );
}
